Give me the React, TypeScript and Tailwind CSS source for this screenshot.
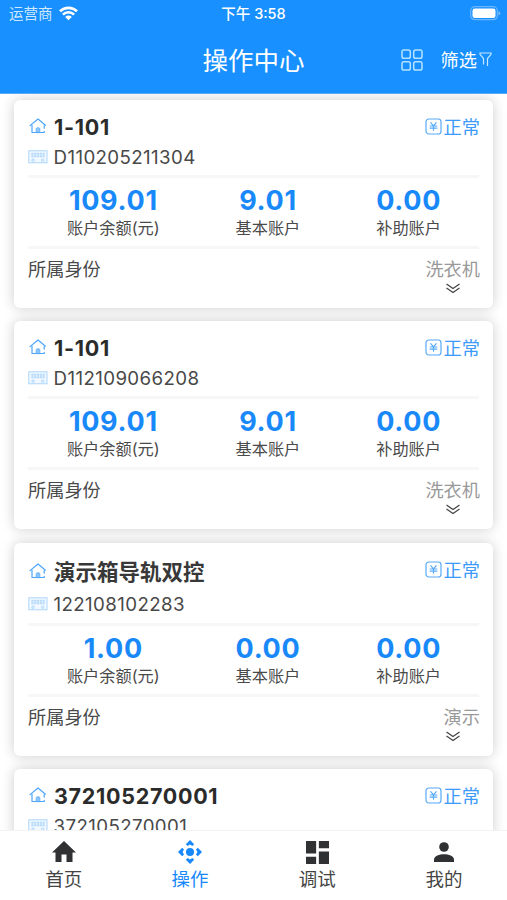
import React from 'react';

type Account = {
  name: string;
  code: string;
  details?: { balance: string; basic: string; subsidy: string; identity: string };
  cjk?: boolean;
};

const accounts: Account[] = [
  { name: '1-101', code: 'D110205211304', details: { balance: '109.01', basic: '9.01', subsidy: '0.00', identity: '洗衣机' } },
  { name: '1-101', code: 'D112109066208', details: { balance: '109.01', basic: '9.01', subsidy: '0.00', identity: '洗衣机' } },
  { name: '演示箱导轨双控', code: '122108102283', details: { balance: '1.00', basic: '0.00', subsidy: '0.00', identity: '演示' }, cjk: true },
  { name: '372105270001', code: '372105270001' },
];

function WifiIcon() {
  return (
    <svg width="19" height="15" viewBox="0 0 19 15" fill="none" stroke="white" strokeWidth="2.6">
      <path d="M1 5.300a12.200 12.200 0 0 1 17 0" />
      <path d="M3.900 8.600a7.900 7.900 0 0 1 11.200 0" />
      <path d="M6.200 10.900a4.600 4.600 0 0 1 6.600 0L9.500 14.200z" fill="white" stroke="none" />
    </svg>
  );
}

function BatteryIcon() {
  return (
    <svg width="31" height="15" viewBox="0 0 31 15">
      <rect x="0.7" y="0.7" width="26.600" height="13" rx="4" fill="none" stroke="#6ab5ff" strokeWidth="1.200" />
      <rect x="2.500" y="2.500" width="23" height="9.500" rx="2.200" fill="white" />
      <path d="M28.500 5v4.500q1.700-.8 1.700-2.250T28.500 5z" fill="#82c0ff" />
    </svg>
  );
}

function GridIcon() {
  return (
    <svg width="22" height="22" viewBox="0 0 22 22" fill="none" stroke="#b5e2ff" strokeWidth="1.500">
      <rect x="1" y="1" width="8.300" height="8.300" rx="1.800" />
      <rect x="12.700" y="1" width="8.300" height="8.300" rx="1.800" />
      <rect x="1" y="12.700" width="8.300" height="8.300" rx="1.800" />
      <rect x="12.700" y="12.700" width="8.300" height="8.300" rx="1.800" />
    </svg>
  );
}

function FunnelIcon() {
  return (
    <svg width="13" height="15" viewBox="0 0 13 15" fill="none" stroke="#c5e8ff" strokeWidth="1.200">
      <path d="M4.500 12.500V6.500L1 2.300V1h11v1.300L8.500 6.500v7.500" />
    </svg>
  );
}

function HouseIcon() {
  return (
    <svg width="18" height="16" viewBox="0 0 18 16" fill="none" stroke="#4ba5fb" strokeWidth="1.200" strokeLinecap="round" strokeLinejoin="round">
      <path d="M1 7.600 9 1l7.500 6.200" />
      <path d="M3 7.300v7.200h12.200v-1.200M15.200 7.500v2.700" />
      <path d="M7.100 14.300v-3.200q0-1.500 1.900-1.500t1.900 1.500v3.200z" fill="#8cc6fc" strokeWidth=".6" />
    </svg>
  );
}

function MeterIcon() {
  return (
    <svg width="20" height="14" viewBox="0 0 20 14" fill="none" stroke="#a5d2fc" strokeWidth=".9">
      <rect x=".8" y=".8" width="18.200" height="12" fill="#f1f8ff" />
      <path d="M3.300 3.700h13.400M3.300 6.200h13.400" strokeWidth="2" strokeDasharray="2.200 .6" stroke="#b5d9fc" />
      <circle cx="5" cy="10.200" r="1.200" />
      <circle cx="14.700" cy="10.200" r="1.200" />
    </svg>
  );
}

function YenIcon() {
  return (
    <svg width="17" height="17" viewBox="0 0 17 17" fill="none" stroke="#58aafa" strokeWidth="1.200">
      <rect x="1" y="1" width="15" height="15" rx="2.800" />
      <path d="m5.500 4.300 3 3.500 3-3.500M4.700 8h7.600M4.700 10.100h7.600M8.500 7.800v4.900" />
    </svg>
  );
}

function ExpandIcon() {
  return (
    <svg width="14" height="11" viewBox="0 0 14 11" fill="none" stroke="#444" strokeWidth="1.200">
      <path d="m.5 1 6.500 4.600L13.500 1M.5 5 7 9.600 13.500 5" />
    </svg>
  );
}

function Stat({ value, label }: { value: string; label: string }) {
  return (
    <div className="flex flex-col items-center">
      <div className="h-[29px] text-[27px] leading-[28px] font-bold tracking-[0.7px] text-[#1989fa]">{value}</div>
      <div className="h-6 text-[16.200px] leading-6 text-[#4a4a4a]">{label}</div>
    </div>
  );
}

function Card({ account }: { account: Account }) {
  return (
    <section className="shrink-0 rounded-md bg-white px-[14px] shadow-[0_0_13px_rgba(0,0,0,0.2)]">
      <div className={account.cjk ? 'flex h-[80px] flex-col pt-[14px]' : 'flex h-[75px] flex-col pt-[13px]'}>
        <div className={account.cjk ? 'flex h-[32px] items-start justify-between' : 'flex h-[28px] items-start justify-between'}>
          <div className="flex items-center">
            <span className="ml-px w-[25px] pb-[2px]"><HouseIcon /></span>
            <span className={account.cjk ? 'text-[21.500px] leading-[30px] font-bold text-[#383838]' : 'text-[21.500px] leading-[28px] font-bold tracking-[0.700px] text-[#2b2b2b]'}>
              {account.name}
            </span>
          </div>
          <div className="-mr-px flex h-[26px] items-center gap-[1.500px] text-[18.200px] leading-7 text-[#3c9bfa]">
            <YenIcon />
            <span className="pt-px">正常</span>
          </div>
        </div>
        <div className="flex h-[31px] items-center">
          <span className="w-[25.500px]"><MeterIcon /></span>
          <span className="pt-[2px] text-[18.700px] leading-[30px] tracking-[0.400px] text-[#484848]">{account.code}</span>
        </div>
      </div>
      {account.details && (
        <>
          <div className="flex h-[71px] justify-around border-t-[3px] border-[#f7f7f7] pt-[9px] pl-px">
            <Stat value={account.details.balance} label="账户余额(元)" />
            <Stat value={account.details.basic} label="基本账户" />
            <Stat value={account.details.subsidy} label="补助账户" />
          </div>
          <div className="h-[62px] border-t-[3px] border-[#f7f7f7] pt-[6px]">
            <div className="-mr-px flex h-7 justify-between text-[18.200px] leading-7">
              <span className="text-[#4a4a4a]">所属身份</span>
              <span className="text-[#999]">{account.details.identity}</span>
            </div>
            <div className="flex justify-end pr-[19px]"><ExpandIcon /></div>
          </div>
        </>
      )}
    </section>
  );
}

function HomeTabIcon() {
  return <svg width="24" height="22" viewBox="0 0 24 22" fill="#303133"><path d="m12 0 12 11.500h-3.500V21h-6v-7.500h-5V21h-6v-9.500H0z" /></svg>;
}

function OperateTabIcon() {
  return (
    <svg width="24" height="24" viewBox="0 0 24 24" fill="#1989fa">
      <circle cx="12" cy="12" r="4" />
      <path d="m12 0 4.200 4.200-1.800 1.800L12 4.600 9.600 6 7.800 4.200zM12 24l-4.200-4.200L9.600 18l2.400 1.400 2.400-1.400 1.800 1.800zM0 12l4.200-4.200L6 9.600 4.600 12 6 14.400l-1.800 1.800zM24 12l-4.200 4.200-1.800-1.800 1.400-2.400L18 9.600l1.800-1.800z" />
    </svg>
  );
}

function DebugTabIcon() {
  return <svg width="23" height="23" viewBox="0 0 22 22" fill="#303133"><path d="M0 0h9.700v12H0zM12.300 0H22v7h-9.700zM0 15h9.700v7H0zM12.300 10H22v12h-9.700z" /></svg>;
}

function ProfileTabIcon() {
  return <svg width="20" height="20" viewBox="0 0 20 20" fill="#303133"><circle cx="10" cy="5" r="4.800" /><path d="M0 20v-2.500C0 14 5.500 12.300 10 12.300s10 1.700 10 5.200V20z" /></svg>;
}

const tabs = [
  { label: '首页', icon: <HomeTabIcon />, active: false },
  { label: '操作', icon: <OperateTabIcon />, active: true },
  { label: '调试', icon: <DebugTabIcon />, active: false },
  { label: '我的', icon: <ProfileTabIcon />, active: false },
];

export default function App() {
  return (
    <div className="flex h-[900px] w-[507px] flex-col overflow-hidden bg-white font-['Inter','Noto_Sans_CJK_SC',sans-serif]">
      <header className="flex h-[94px] shrink-0 flex-col border-b border-[#58aafb] bg-[#1890ff] text-white">
        <div className="grid h-[27px] grid-cols-3 items-center pr-[6px] pl-[9px] text-[14.500px]">
          <div className="flex items-center gap-[6px] text-[#cfe9ff]"><span className="pt-px">运营商</span><WifiIcon /></div>
          <div className="pt-px pr-[3px] text-center text-[14.500px] font-medium whitespace-nowrap">下午 3:58</div>
          <div className="flex justify-end"><BatteryIcon /></div>
        </div>
        <div className="grid h-[66px] grid-cols-[1fr_auto_1fr] items-center pr-[15px] pl-[15px]">
          <span />
          <h1 className="pt-px text-[25.500px] leading-9">操作中心</h1>
          <div className="flex items-center justify-end">
            <GridIcon />
            <span className="ml-[18px] text-[18.200px] leading-7">筛选</span>
            <span className="ml-[2px] pb-[2px]"><FunnelIcon /></span>
          </div>
        </div>
      </header>
      <main className="flex min-h-0 flex-1 flex-col gap-[13.400px] overflow-hidden px-[14px] pt-[6px]">
        {accounts.map((account) => <Card key={account.code} account={account} />)}
      </main>
      <nav className="grid h-[70px] shrink-0 grid-cols-4 border-t border-[#f3f3f3] bg-white">
        {tabs.map((tab) => (
          <div key={tab.label} className={tab.active ? 'flex flex-col items-center pt-[9px] text-[#1989fa]' : 'flex flex-col items-center pt-[9px] pl-px text-[#444]'}>
            <div className="flex h-6 items-center">{tab.icon}</div>
            <span className="mt-px text-[18.500px] leading-7">{tab.label}</span>
          </div>
        ))}
      </nav>
    </div>
  );
}
